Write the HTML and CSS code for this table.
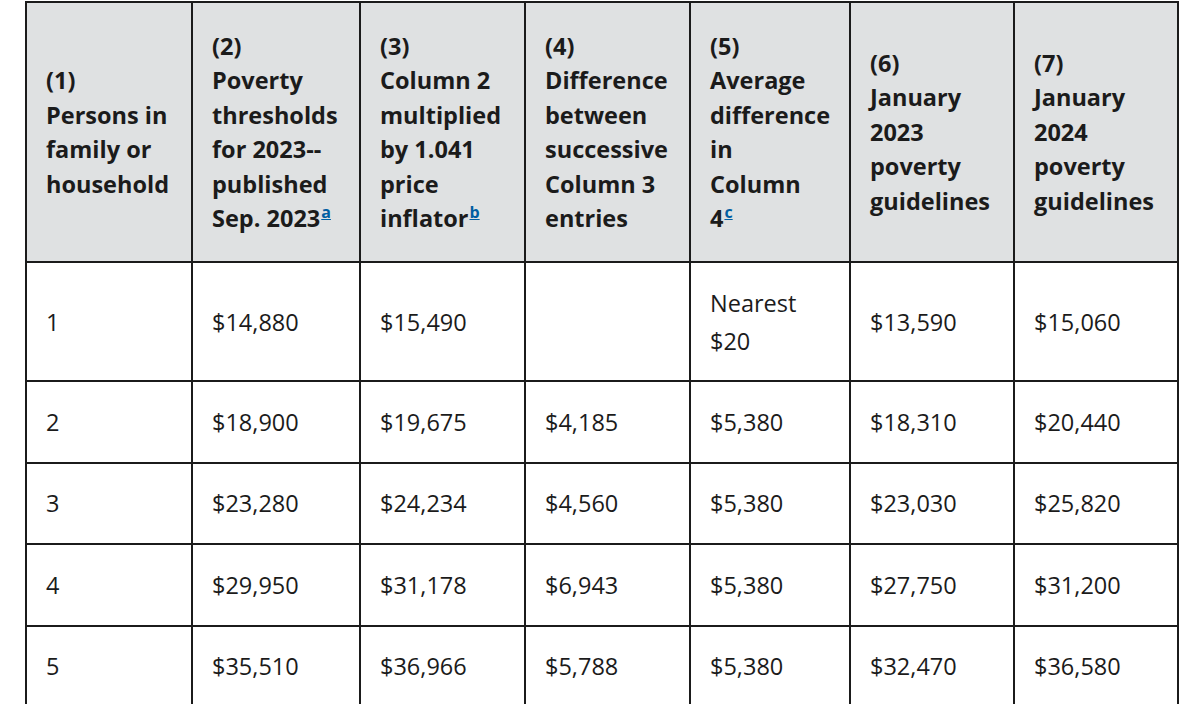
FILE: index.html
```html
<!DOCTYPE html>
<html lang="en">
<head>
<meta charset="utf-8">
<title>Poverty guidelines</title>
<link rel="stylesheet" href="styles.css">
</head>
<body>
<div class="wrap">
<table class="data">
  <colgroup>
    <col class="c1"><col class="c2"><col class="c3"><col class="c4"><col class="c5"><col class="c6"><col class="c7">
  </colgroup>
  <thead>
    <tr>
      <th>(1)<br>Persons in family or household</th>
      <th>(2)<br>Poverty thresholds for 2023--published Sep. 2023<sup><a href="#a">a</a></sup></th>
      <th>(3)<br>Column 2 multiplied by 1.041 price inflator<sup><a href="#b">b</a></sup></th>
      <th>(4)<br>Difference between successive Column 3 entries</th>
      <th>(5)<br>Average difference in<br>Column<br>4<sup><a href="#c">c</a></sup></th>
      <th>(6)<br>January 2023 poverty guidelines</th>
      <th>(7)<br>January 2024 poverty guidelines</th>
    </tr>
  </thead>
  <tbody>
    <tr><td>1</td><td>$14,880</td><td>$15,490</td><td></td><td>Nearest $20</td><td>$13,590</td><td>$15,060</td></tr>
    <tr><td>2</td><td>$18,900</td><td>$19,675</td><td>$4,185</td><td>$5,380</td><td>$18,310</td><td>$20,440</td></tr>
    <tr><td>3</td><td>$23,280</td><td>$24,234</td><td>$4,560</td><td>$5,380</td><td>$23,030</td><td>$25,820</td></tr>
    <tr><td>4</td><td>$29,950</td><td>$31,178</td><td>$6,943</td><td>$5,380</td><td>$27,750</td><td>$31,200</td></tr>
    <tr><td>5</td><td>$35,510</td><td>$36,966</td><td>$5,788</td><td>$5,380</td><td>$32,470</td><td>$36,580</td></tr>
  </tbody>
</table>
</div>
</body>
</html>
```
FILE: styles.css
```css
html, body {
  margin: 0;
  padding: 0;
  background: #ffffff;
}
body {
  font-family: "Open Sans", "Noto Sans", sans-serif;
  color: #1b1b1b;
  overflow: hidden;
}
.wrap {
  padding: 1px 0 0 25px;
}
.data {
  border-collapse: collapse;
  table-layout: fixed;
  width: 1152px;
  font-size: 23.5px;
}
.c1 { width: 166px; }
.c2 { width: 168px; }
.c3 { width: 165px; }
.c4 { width: 165px; }
.c5 { width: 160px; }
.c6 { width: 164px; }
.c7 { width: 164px; }
.data th,
.data td {
  border: 2px solid #1b1b1b;
  text-align: left;
  vertical-align: middle;
  padding: 0 16px 0 19px;
}
.data th {
  background: #dfe1e2;
  font-weight: 700;
  line-height: 34.5px;
  padding-top: 25.5px;
  padding-bottom: 25.5px;
}
.data td {
  background: #ffffff;
  font-weight: 400;
  line-height: 38px;
  padding-top: 20.7px;
  padding-bottom: 20.7px;
}
.data sup {
  font-size: 16px;
  line-height: 0;
  vertical-align: 9px;
  margin-left: 1px;
}
.data sup a {
  color: #005ea2;
  text-decoration: underline;
  font-weight: 700;
}
```
